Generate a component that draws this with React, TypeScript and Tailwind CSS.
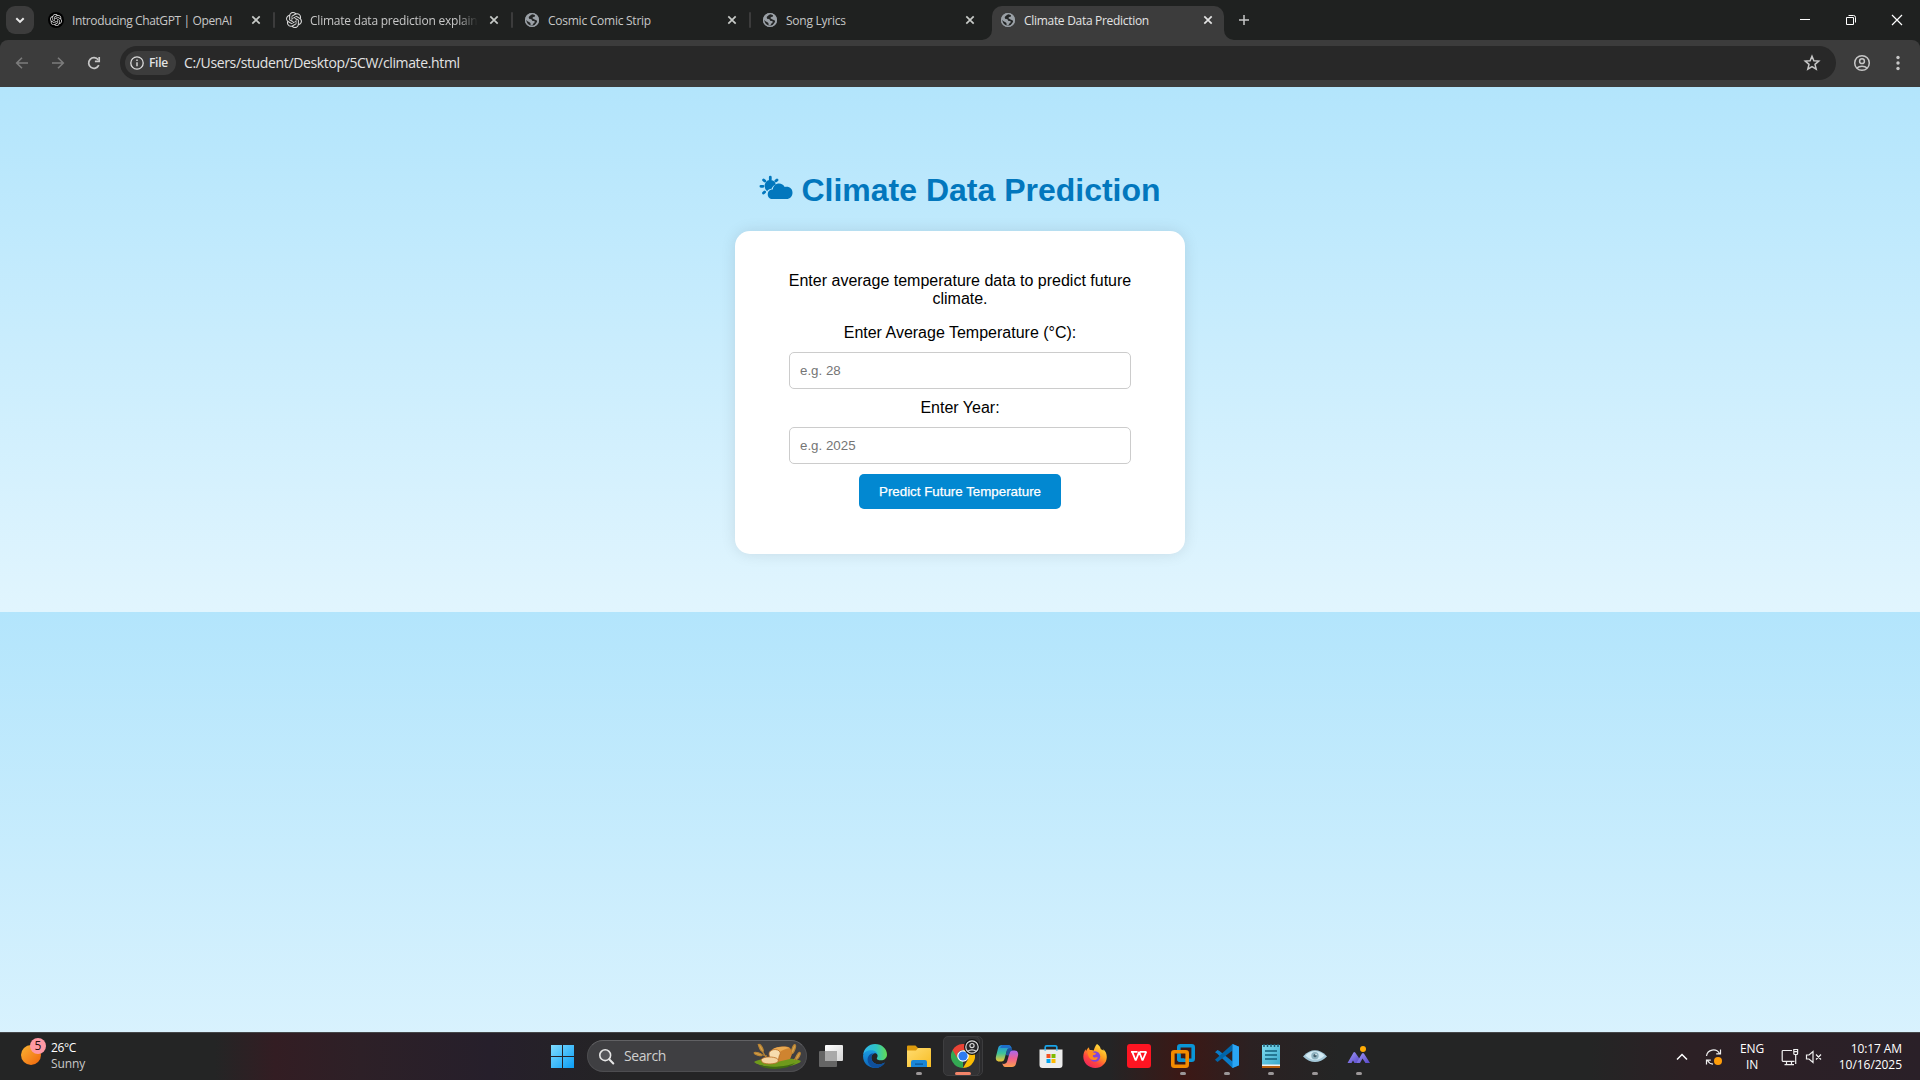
import React from "react";
import { SiOpenai } from "react-icons/si";

const UI = "font-['Open_Sans',sans-serif]";

/* ---------- browser icons ---------- */

function Globe() {
  return (
    <svg width="16" height="16" viewBox="0 0 16 16" className="shrink-0">
      <circle cx="8" cy="8" r="7" fill="#9aa0a6" />
      <path
        d="M8.600 1.800C6.600 2.600 6.900 3.600 5.800 4.100 4.700 4.600 4.500 5.600 5.100 6.400c.6.8 2 .3 2.600 1 .4.6.2 1.400 1.100 1.600.9.2 1.500-.100 1.900.6.300.7-.2 1.300-1 1.700-.8.400-.9 1.300-1.200 2.100-.8.300-1.500.2-2 0 .3-1.200.1-2.300-.7-2.900C4.900 9.900 3.200 9.600 1.900 7.800 2.100 10.900 3.600 13.500 7 14.300c2 .3 4-.8 4.600-2.300.3-.9 1.600-1.500 1.500-2.700-.1-1-1-1.500-2-1.600-.8-.1-1-.9-1.900-1-.8-.1-.9-.9-.3-1.400.7-.5 1.700-.3 2.100-1C11.300 3.100 10.300 1.900 8.600 1.800z"
        fill="#252727"
      />
      <circle cx="8" cy="8" r="6.400" fill="none" stroke="#9aa0a6" strokeWidth="1.300" />
    </svg>
  );
}

function OpenAiDark() {
  return (
    <span className="flex size-4 shrink-0 items-center justify-center rounded-full bg-black">
      <SiOpenai size={12} color="#d8d8d8" />
    </span>
  );
}

function CloseX({ color }: { color: string }) {
  return (
    <svg width="16" height="16" viewBox="0 0 16 16" className="shrink-0">
      <path d="M4.300 4.300 11.700 11.700M11.700 4.300 4.300 11.700" stroke={color} strokeWidth="1.700" />
    </svg>
  );
}

function Tab({ icon, title, sep, look = "" }: { icon: React.ReactNode; title: string; sep?: boolean; look?: string }) {
  return (
    <div className="flex h-7 w-[238px] items-center pl-[11px]">
      {icon}
      <span
        className={`mt-px ml-2 w-[168px] overflow-hidden whitespace-nowrap text-[12px] leading-5 text-[#c7c7c7] ${look || "tracking-[-0.25px]"}`}
      >
        {title}
      </span>
      <span className="ml-2">
        <CloseX color="#c7cac7" />
      </span>
      <span className={`ml-auto h-4 w-0.5 rounded ${sep ? "bg-[#3c3c3c]" : ""}`} />
    </div>
  );
}

function TabStrip() {
  return (
    <div className="flex h-10 items-start bg-[#1f2120] pl-1.5">
      <div className="mt-1.5 mr-[3px] flex size-7 items-center justify-center rounded-[9px] bg-[#3c3c3c]">
        <svg width="12" height="12" viewBox="0 0 12 12">
          <path d="M2.300 4.200 6 7.900 9.700 4.200" fill="none" stroke="#e8e8e8" strokeWidth="2" />
        </svg>
      </div>
      <div className="flex pt-1.5">
        <Tab icon={<OpenAiDark />} title="Introducing ChatGPT | OpenAI" sep look="tracking-[-0.38px]" />
        <Tab
          icon={<SiOpenai size={16} color="#d8d8d8" className="shrink-0" />}
          title="Climate data prediction explained"
          sep
          look="tracking-[-0.22px] [mask-image:linear-gradient(to_right,#000_148px,transparent_168px)]"
        />
        <Tab icon={<Globe />} title="Cosmic Comic Strip" sep />
        <Tab icon={<Globe />} title="Song Lyrics" />
      </div>
      <div className="relative mt-1.5 ml-[3px] flex h-[34px] w-[232px] items-start rounded-t-[10px] bg-[#3c3c3c] pl-2">
        <svg width="10" height="10" className="absolute bottom-0 -left-[10px]">
          <path d="M10 0V10H0A10 10 0 0 0 10 0z" fill="#3c3c3c" />
        </svg>
        <svg width="10" height="10" className="absolute -right-[10px] bottom-0">
          <path d="M0 0V10H10A10 10 0 0 1 0 0z" fill="#3c3c3c" />
        </svg>
        <div className="flex h-7 items-center">
          <Globe />
          <span className="mt-px ml-2 w-[168px] whitespace-nowrap text-[12px] leading-5 tracking-[-0.3px] text-[#e3e3e3]">
            Climate Data Prediction
          </span>
          <span className="ml-2">
            <CloseX color="#e3e3e3" />
          </span>
        </div>
      </div>
      <svg width="12" height="12" viewBox="0 0 12 12" className="mt-[14px] ml-[14px]">
        <path d="M6 1V11M1 6H11" stroke="#c7c7c7" strokeWidth="1.500" />
      </svg>
      <div className="ml-auto flex">
        {[
          <path key="m" d="M3 7.500H13" stroke="#fff" strokeWidth="1" />,
          <path key="r" d="M3.500 5.500h7v7h-7zM5.500 3.500h5a2 2 0 0 1 2 2v5" fill="none" stroke="#fff" strokeWidth="1" />,
          <path key="c" d="M3 3 13 13M13 3 3 13" stroke="#fff" strokeWidth="1.200" />,
        ].map((p, i) => (
          <span key={i} className="flex h-10 w-[46px] items-center justify-center">
            <svg width="16" height="16" viewBox="0 0 16 16">
              {p}
            </svg>
          </span>
        ))}
      </div>
    </div>
  );
}

function Toolbar() {
  return (
    <div className="h-[47px] bg-[#1f2120]">
      <div className="flex h-[46px] items-center rounded-t-[8px] bg-[#3c3c3c] pl-3.5 shadow-[0_1px_0_#3c3c3c]">
        <svg width="16" height="16" viewBox="0 0 16 16">
          <path d="M14 8H3M8 2.700 2.700 8 8 13.300" fill="none" stroke="#7c7c7c" strokeWidth="1.600" />
        </svg>
        <svg width="16" height="16" viewBox="0 0 16 16" className="ml-5">
          <path d="M2 8H13M8 2.700 13.300 8 8 13.300" fill="none" stroke="#7c7c7c" strokeWidth="1.600" />
        </svg>
        <svg width="16" height="16" viewBox="0 0 16 16" className="ml-5">
          <path d="M12.800 10.200A5.300 5.300 0 1 1 12.200 4.800" fill="none" stroke="#c7c7c7" strokeWidth="1.700" />
          <path d="M13.200 2V6.300H8.900" fill="none" stroke="#c7c7c7" strokeWidth="1.700" />
        </svg>
        <div className="ml-[18px] flex h-[34px] w-[1716px] items-center rounded-full bg-[#282828] pl-[5px]">
          <div className="flex h-6 w-[51px] items-center rounded-full bg-[#3c3c3c] pl-[5px]">
            <svg width="14" height="14" viewBox="0 0 14 14" className="shrink-0">
              <circle cx="7" cy="7" r="6.200" fill="none" stroke="#dcdcdc" strokeWidth="1.300" />
              <path d="M7 6.200V10.300M7 3.600V5" stroke="#dcdcdc" strokeWidth="1.400" />
            </svg>
            <span className="ml-[5px] text-[12px] leading-4 font-semibold tracking-[-0.3px] text-[#e3e3e3]">File</span>
          </div>
          <span className="ml-2 text-[14px] leading-5 tracking-[-0.36px] whitespace-nowrap text-[#e3e3e3]">
            C:/Users/student/Desktop/5CW/climate.html
          </span>
          <svg width="18" height="18" viewBox="0 0 24 24" className="mr-[15px] ml-auto">
            <path
              d="M12 2.900 14.500 9l6.500.500-5 4.300 1.600 6.500L12 16.800 6.400 20.300 8 13.800 3 9.500 9.500 9z"
              fill="none"
              stroke="#c7c7c7"
              strokeWidth="2"
            />
          </svg>
        </div>
        <svg width="18" height="18" viewBox="0 0 18 18" className="ml-[17px]" fill="none" stroke="#c7c7c7" strokeWidth="1.500">
          <circle cx="9" cy="9" r="7.300" />
          <circle cx="9" cy="7.200" r="2.400" />
          <path d="M3.800 14C6.500 11.600 11.500 11.600 14.200 14" />
        </svg>
        <svg width="6" height="18" viewBox="0 0 6 18" className="ml-6" fill="#c7c7c7">
          <circle cx="3" cy="3.500" r="1.700" />
          <circle cx="3" cy="9" r="1.700" />
          <circle cx="3" cy="14.500" r="1.700" />
        </svg>
      </div>
    </div>
  );
}

/* ---------- page ---------- */

function CloudSun() {
  return (
    <svg width="34" height="26" viewBox="0 0 34 26" className="mr-2 mb-1.5 shrink-0" fill="#0277bd">
      <g stroke="#0277bd" strokeWidth="2.800" strokeLinecap="round">
        <path d="M11.300 2.200V4.400M4.600 4.900 5.800 6.100M18 4.900 16.800 6.100M1.900 11.300H4M4.500 18 5.600 17" />
      </g>
      <path d="M5.800 11.700a5.600 5.600 0 0 1 11-2.300c-2.200.8-3.600 2.400-4.200 4.400-2.100.2-3.600 1.100-4.500 2.500a5.500 5.500 0 0 1-2.300-4.600z" />
      <path d="M12 24a5 5 0 0 1-.200-9.300c.600-.200 1.300-.200 2-.100C14.200 10.700 17 8.600 20 8.600c2.500 0 4.600 1.300 5.700 3.400C30.500 11 33.500 14 33.500 17.700 33.500 21.300 31 24 27.500 24z" />
    </svg>
  );
}

function Page() {
  return (
    <main className="flex h-[945px] flex-col items-center overflow-hidden bg-[linear-gradient(to_bottom,#b3e5fc,#e1f5fe)] bg-[length:100%_525px] bg-repeat-y font-['Liberation_Sans',Arial,sans-serif] text-black">
      <h1 className="mt-[85px] flex h-[37px] items-center text-[32px] leading-[37px] font-bold whitespace-nowrap text-[#0277bd]">
        <CloudSun />
        <span>Climate Data Prediction</span>
      </h1>
      <form
        onSubmit={(e) => e.preventDefault()}
        className="mt-[22px] flex h-[323px] w-[450px] flex-col items-center rounded-[15px] bg-white px-[54px] pt-[41px] shadow-[0_0_15px_rgba(0,0,0,0.1)]"
      >
        <p className="text-center text-[16px] leading-[18px] whitespace-nowrap">
          Enter average temperature data to predict future
          <br />
          climate.
        </p>
        <label className="mt-4 text-[16px] leading-[18px]">Enter Average Temperature (°C):</label>
        <input
          placeholder="e.g. 28"
          className="mt-2.5 h-[37px] w-full shrink-0 rounded-[5px] border border-[#ccc] px-2.5 text-[13.333px] placeholder:text-[#757575]"
        />
        <label className="mt-2.5 text-[16px] leading-[18px]">Enter Year:</label>
        <input
          placeholder="e.g. 2025"
          className="mt-2.5 h-[37px] w-full shrink-0 rounded-[5px] border border-[#ccc] px-2.5 text-[13.333px] placeholder:text-[#757575]"
        />
        <button className="mt-2.5 h-[35px] w-[202px] shrink-0 rounded-[5px] bg-[#0288d1] text-[13.333px] whitespace-nowrap text-white [-webkit-text-stroke:0.25px_white]">
          Predict Future Temperature
        </button>
      </form>
    </main>
  );
}

/* ---------- taskbar icons ---------- */

const S = { width: 24, height: 24, viewBox: "0 0 24 24" };

const WindowsIcon = () => (
  <svg {...S}>
    <defs>
      <linearGradient id="win" x1="0" y1="0" x2="1" y2="1" gradientUnits="objectBoundingBox">
        <stop offset="0" stopColor="#7fdcff" />
        <stop offset="1" stopColor="#0a9df5" />
      </linearGradient>
    </defs>
    <path d="M1 1h11v11H1zM13 1h11v11H13zM1 13h11v11H1zM13 13h11v11H13z" fill="url(#win)" />
  </svg>
);

const TaskView = () => (
  <svg {...S}>
    <defs>
      <linearGradient id="tv" x1="0" y1="0" x2="1" y2="1">
        <stop offset="0" stopColor="#fff" />
        <stop offset="1" stopColor="#d4d4d4" />
      </linearGradient>
    </defs>
    <rect x="6" y="1" width="18" height="16" rx="1" fill="url(#tv)" />
    <rect x="0" y="7" width="18" height="16" rx="1" fill="#6d6d6d" fillOpacity=".9" />
    <rect x="6" y="7" width="12" height="10" fill="#a9a9a9" />
  </svg>
);

const Edge = () => (
  <svg {...S}>
    <defs>
      <linearGradient id="eg" x1="0" y1=".3" x2="1" y2=".3">
        <stop offset="0" stopColor="#2fb4ee" />
        <stop offset=".55" stopColor="#2ec4c4" />
        <stop offset="1" stopColor="#63dc52" />
      </linearGradient>
      <linearGradient id="eb" x1="0" y1="0" x2="0" y2="1">
        <stop offset="0" stopColor="#1b9de2" />
        <stop offset="1" stopColor="#0c63b8" />
      </linearGradient>
    </defs>
    <path d="M.200 10.500C1 4.600 5.800 0 12 0c7 0 12 5 12 10.500 0 3.500-2.700 5.800-6 5.800-2.800 0-4.200-1-4.200-1.900 0-.600.800-1.100.800-2.600 0-2.300-2.400-4.400-5.600-4.400C4.700 7.400 1.800 8.300.200 10.500z" fill="url(#eg)" />
    <path d="M.1 11.200C1 8 4.200 6.200 8 6.200c3.500 0 6.300 2 6.500 4.600-.8-1.200-2.200-1.700-3.300-1.300C8.600 10.500 8 12.700 8.500 15c.8 4 4.800 5.800 8.500 5.300 2-.3 3.500-1.100 5-1.800-2 3.500-5.600 5.500-10 5.500C5 24-.5 18.500.1 11.200z" fill="url(#eb)" />
    <path d="M8.500 15c-.5-2.300.1-4.500 2.700-5.500-3.700-.7-6.600 2.100-6.600 6 0 4.200 3 7.800 7.400 8.500 4.400 0 8-2 10-5.500-1.500.7-3 1.500-5 1.800-3.700.5-7.700-1.300-8.500-5.300z" fill="#0f4f9c" />
  </svg>
);

const Explorer = () => (
  <svg {...S}>
    <defs>
      <linearGradient id="fx" x1="0" y1="0" x2="1" y2="1">
        <stop offset="0" stopColor="#ffdc70" />
        <stop offset="1" stopColor="#f8bd24" />
      </linearGradient>
    </defs>
    <path d="M0 2.500a1 1 0 0 1 1-1h7.500L11 4h12v4H0z" fill="#dd9a0c" />
    <path d="M0 6.500h9L11 4h12a1 1 0 0 1 1 1v18H0z" fill="url(#fx)" />
    <path d="M4 23v-5a2 2 0 0 1 2-2h12a2 2 0 0 1 2 2v5z" fill="#1a86d8" />
    <path d="M8 19.500h8v1.200H8z" fill="#0b5394" />
  </svg>
);

const ChromeIcon = () => (
  <svg {...S}>
    <path d="M12 12V24A12 12 0 0 1 1.600 6z" fill="#34a853" />
    <path d="M12 6H22.400A12 12 0 0 1 12 24L17.200 15z" fill="#fbbc04" />
    <path d="M1.600 6 6.800 15A6 6 0 0 1 12 6H22.400A12 12 0 0 0 1.600 6z" fill="#ea4335" />
    <circle cx="12" cy="12" r="5.800" fill="#fff" />
    <circle cx="12" cy="12" r="4.600" fill="#2f7cf0" />
  </svg>
);

const Copilot = () => (
  <svg {...S}>
    <defs>
      <linearGradient id="ca" x1="0" y1="0" x2="0" y2="1">
        <stop offset="0" stopColor="#1f8fe8" />
        <stop offset=".5" stopColor="#3cc29a" />
        <stop offset="1" stopColor="#f2c531" />
      </linearGradient>
      <linearGradient id="cb" x1="0" y1="0" x2="0" y2="1">
        <stop offset="0" stopColor="#a868f0" />
        <stop offset=".5" stopColor="#f0608f" />
        <stop offset="1" stopColor="#fba04c" />
      </linearGradient>
    </defs>
    <path d="M16.800 4.500 15.900 2.500A2.600 2.600 0 0 0 13.500 1H7a4 4 0 0 0-3.800 2.800L1.100 12C.200 15.400 1.500 17.500 4.300 17.500h2.200a3 3 0 0 0 2.900-2.200L11.700 7a3.500 3.500 0 0 1 5.100-2.500z" fill="url(#ca)" />
    <path d="M7.200 19.500l.9 2A2.600 2.600 0 0 0 10.500 23H17a4 4 0 0 0 3.800-2.800L22.900 12c.900-3.400-.400-5.500-3.200-5.500h-2.200a3 3 0 0 0-2.900 2.200L12.300 17a3.500 3.500 0 0 1-5.100 2.500z" fill="url(#cb)" />
    <path d="M7 1h6.500a2.600 2.600 0 0 1 2.400 1.500l1.600 4a3 3 0 0 0-2.900 2.200l-.9 3-2.900-.7L11.700 7c.4-1.700.9-2.400 1.500-3H5z" fill="#1c62c4" fillOpacity=".75" />
  </svg>
);

const Store = () => (
  <svg {...S}>
    <path d="M6.200 7V3.200A1.400 1.400 0 0 1 7.600 1.800h8.800a1.400 1.400 0 0 1 1.400 1.400V7" fill="none" stroke="#19a4e8" strokeWidth="1.700" />
    <path d="M.5 5.500h23V21a3 3 0 0 1-3 3h-17a3 3 0 0 1-3-3z" fill="#ececec" />
    <path d="M6.200 5.500v1M17.800 5.500v1" stroke="#19a4e8" strokeWidth="1.700" />
    <path d="M7.500 10h4v4h-4z" fill="#f25022" />
    <path d="M12.500 10h4v4h-4z" fill="#7fba00" />
    <path d="M7.500 15h4v4h-4z" fill="#00a4ef" />
    <path d="M12.500 15h4v4h-4z" fill="#ffb900" />
  </svg>
);

const Firefox = () => (
  <svg {...S}>
    <defs>
      <linearGradient id="ff" x1=".85" y1="0" x2=".2" y2="1">
        <stop offset="0" stopColor="#fff04a" />
        <stop offset=".4" stopColor="#ffa01f" />
        <stop offset=".7" stopColor="#ff4540" />
        <stop offset="1" stopColor="#ec2060" />
      </linearGradient>
    </defs>
    <path d="M14 0c2.500 1.500 3.600 3.500 3.800 5.200.8.200 2 .8 2.700 1.500 0-.7-.2-1.200-.4-1.600 2.500 2 3.700 4.900 3.700 7.900C23.800 19.300 18.500 24 12.300 24 5.500 24 .3 19 .3 12.800c0-3.200 1-5.800 2.400-7.500L3 7.200C3.700 5.500 5 4 6 3.300c0 1 .3 2 .8 2.700 1.500-.3 2.900 0 4 .5C11.300 4 12.500 1.500 14 0z" fill="url(#ff)" />
    <circle cx="12" cy="12.500" r="5.200" fill="#8244dc" />
    <path d="M4.500 8.200c1.900-1.300 4.500-1 6 .3 1.200.3 2.400.5 2.700 1.200-.5 1-2 1.100-2.900 1.300-.8.500-.6 1.700.3 2.200 1.700.8 2.500-.2 4.200.2-.6 2-2.300 3-4.500 2.600C6.500 15.500 5 12 4.500 8.200z" fill="#ff8a1f" />
  </svg>
);

const Wps = () => (
  <svg {...S}>
    <rect width="24" height="24" rx="3" fill="#fe1522" />
    <path d="M4 7.800h6.500M5.200 7.800 8.700 16.500l3.500-8.700L15.500 16.500 19.200 7.800H13" fill="none" stroke="#fff" strokeWidth="1.800" strokeLinejoin="bevel" />
  </svg>
);

const VMware = () => (
  <svg {...S} fill="none" strokeWidth="3.600">
    <rect x="7.800" y="1.800" width="14.400" height="14.400" rx="1.500" stroke="#0a95d6" />
    <rect x="1.800" y="7.800" width="14.400" height="14.400" rx="1.500" stroke="#f38b00" />
    <path d="M7.800 10V14.700A1.500 1.500 0 0 0 9.300 16.200H13" stroke="#0a95d6" />
  </svg>
);

const VsCode = () => (
  <svg {...S}>
    <path d="M17.500 0 24 2.800V21.200L17.500 24 2 9.500 0 8.200 2.500 6 4.500 7 17.500 17.500V6.500z" fill="#0a7cc9" />
    <path d="M0 15.800 17.500 0V6.500L2.500 18z" fill="#0065a9" />
    <path d="M17.500 0 24 2.800V21.200L17.500 24z" fill="#2aa5f5" />
  </svg>
);

const Notepad = () => (
  <svg {...S}>
    <defs>
      <linearGradient id="np" x1="0" y1="0" x2="1" y2="1">
        <stop offset="0" stopColor="#7fdcf0" />
        <stop offset="1" stopColor="#3ba9cc" />
      </linearGradient>
    </defs>
    <path d="M3 20h18v4H3z" fill="#b8600f" />
    <path d="M3 20h18v2H3z" fill="#f2f2f2" />
    <path d="M3 1h18v19.500H3z" fill="url(#np)" />
    <path d="M5 0v3M8.500 0v3M12 0v3M15.500 0v3M19 0v3" stroke="#1f5d75" strokeWidth="1.500" />
    <path d="M6 7h12M6 11h12M6 15h12" stroke="#14607c" strokeWidth="1.500" />
  </svg>
);

const Eye = () => (
  <svg {...S}>
    <path d="M0 12.500C4 8 8 6.300 12 6.300s8 1.700 12 6.200c-4 4-8 5.500-12 5.500S4 16.500 0 12.500z" fill="#a4c8d8" />
    <path d="M2.500 11.500c3-3 6.500-4.300 9.500-4.300s6.500 1.300 9.500 4.300c-3.500 3.500-6.500 4.500-9.500 4.500s-6-1-9.500-4.500z" fill="#d3ebf4" />
    <circle cx="12" cy="11.700" r="3.700" fill="#8fb3c1" />
    <circle cx="12" cy="11.700" r="1.600" fill="#45616e" />
    <circle cx="13" cy="10.600" r=".8" fill="#e8f4f8" />
  </svg>
);

const Peaks = () => (
  <svg {...S}>
    <defs>
      <linearGradient id="pk" x1="0" y1="0" x2="1" y2="1">
        <stop offset="0" stopColor="#a29bf8" />
        <stop offset="1" stopColor="#5646c8" />
      </linearGradient>
    </defs>
    <path d="M.5 19 6.500 8.500Q7.300 7.500 8.200 8.500L13 15.500 10.500 19H7.500L6 16.500 4.500 19z" fill="url(#pk)" />
    <path d="M9.500 19 15 9.500Q16 8.300 17 9.500L23 19H18.500L15.500 14.500 13 19z" fill="url(#pk)" />
    <circle cx="16" cy="5" r="3" fill="#ffac05" />
  </svg>
);

const Bread = () => (
  <svg width="49" height="26" viewBox="0 0 49 26">
    <path d="M1 19C8 14 40 14 48 18 43 25.500 9 26 1 19z" fill="#6f9a1c" />
    <path d="M6 22c10 3 27 2 36-2-7 7-29 8-36 2z" fill="#3f6b12" />
    <g stroke="#b98434" strokeWidth="1.200" fill="#d6a24c">
      <path d="M14 16 5 1M14 13 2 10" fill="none" />
      <ellipse cx="8" cy="5" rx="1.300" ry="4" transform="rotate(-28 8 5)" />
      <ellipse cx="5" cy="11" rx="1.200" ry="4" transform="rotate(-72 5 11)" />
      <path d="M37 14 42 3M41 17 47 9" fill="none" />
      <ellipse cx="40.500" cy="6" rx="1.400" ry="4.500" transform="rotate(20 40.500 6)" />
      <ellipse cx="45" cy="13" rx="1.300" ry="4" transform="rotate(28 45 13)" />
    </g>
    <path d="M18 8C20 4 33 2 37 5c2 2 2 8 0 11L24 19z" fill="#cf8430" />
    <path d="M20 6C24 3.500 33 3 36.500 5 32 6 29 7 27 9z" fill="#e9a851" />
    <path d="M16 11c0-5 9-6 11-2 1 2-1 3-1 5l-1 5-8-2z" fill="#f6dcae" stroke="#b76d25" strokeWidth=".8" />
    <path d="M8 17c1-3 9-4 15-2 3 1 3 4 0 5-5 1.500-11 1-13.500-.500z" fill="#f3d3a0" stroke="#b76d25" strokeWidth=".8" />
  </svg>
);

function Slot({ children, running }: { children: React.ReactNode; running?: boolean }) {
  return (
    <div className="flex h-[47px] w-11 flex-col items-center pt-[11px]">
      {children}
      <span className={`mt-1 h-[3px] w-1.5 rounded-full ${running ? "bg-[#9b9798]" : ""}`} />
    </div>
  );
}

function Taskbar() {
  return (
    <footer className="grid h-12 grid-cols-[540px_1fr_540px] border-t border-[#454648] bg-[linear-gradient(to_right,#242525_0px,#242525_215px,#331d23_275px,#2d2027_360px,#261f2b_490px,#242425_620px,#242425_1110px,#3c1815_1185px,#2b2122_1250px,#242525_1340px,#242525_1590px,#2c2025_1690px,#2a2028_1920px)]">
      <div className="flex pl-5">
        <div className="relative mt-1.5 h-[34px] w-[30px]">
          <div className="absolute top-1.5 left-[1px] size-5 rounded-full bg-linear-to-br from-[#f8b432] to-[#ef6208]" />
          <div className="absolute -top-[1px] left-2.5 flex size-4 items-center justify-center rounded-full bg-[#ff99a4] text-[12px] leading-none text-[#2a1012]">
            5
          </div>
        </div>
        <div className="mt-[7px] ml-px flex flex-col text-[12px] leading-4 tracking-[-0.1px] whitespace-nowrap">
          <span className="tracking-[-0.4px] text-white">26°C</span>
          <span className="text-[#c9c9c9]">Sunny</span>
        </div>
      </div>

      <div className="flex">
        <Slot>
          <WindowsIcon />
        </Slot>
        <div className="mt-[7px] mr-[2px] ml-[3px] flex h-8 w-[220px] items-center rounded-full border border-[#4d4d50] border-t-[#616164] bg-[#3f3f42] pl-2.5">
          <svg width="17" height="17" viewBox="0 0 17 17" fill="none" stroke="#e6e6e6">
            <circle cx="7.200" cy="7.200" r="5.400" strokeWidth="1.600" fill="#55565a" />
            <path d="M11.200 11.200 15.300 15.500" strokeWidth="2" strokeLinecap="round" />
          </svg>
          <span className="mb-px ml-[9px] text-[14px] tracking-[-0.4px] text-[#cfcfcf]">Search</span>
          <span className="mr-1 ml-auto">
            <Bread />
          </span>
        </div>
        <Slot>
          <TaskView />
        </Slot>
        <Slot>
          <Edge />
        </Slot>
        <Slot running>
          <Explorer />
        </Slot>
        <div className="relative flex w-11 flex-col items-center">
          <div className="absolute top-[3px] left-[5px] h-10 w-[37px] rounded-[5px] border border-[#3c3c3e] bg-[#2b2b2d]" />
          <div className="absolute top-[3px] left-[2px] flex h-10 w-[37px] flex-col items-center rounded-[5px] border border-[#3e3e40] bg-[#323234] pt-[7px]">
            <span className="ml-[3px]">
              <ChromeIcon />
            </span>
            <span className="mt-1 ml-[3px] h-[3px] w-4 shrink-0 rounded-full bg-[#f28469]" />
          </div>
          <svg width="16" height="16" viewBox="0 0 16 16" className="absolute top-1.5 left-[23px]" fill="none" stroke="#d8d8d8" strokeWidth="1.200">
            <circle cx="8" cy="8" r="7.200" fill="#252527" strokeWidth="1.600" stroke="#141415" />
            <circle cx="8" cy="8" r="6.200" />
            <circle cx="8" cy="6.600" r="2.100" />
            <path d="M3.900 12.300C6 10.400 10 10.400 12.100 12.300" />
          </svg>
        </div>
        <Slot>
          <Copilot />
        </Slot>
        <Slot>
          <Store />
        </Slot>
        <Slot>
          <Firefox />
        </Slot>
        <Slot>
          <Wps />
        </Slot>
        <Slot running>
          <VMware />
        </Slot>
        <Slot running>
          <VsCode />
        </Slot>
        <Slot running>
          <Notepad />
        </Slot>
        <Slot running>
          <Eye />
        </Slot>
        <Slot running>
          <Peaks />
        </Slot>
      </div>

      <div className="flex items-center justify-end pr-[19px] text-[12px] leading-4 whitespace-nowrap text-white">
        <svg width="12" height="12" viewBox="0 0 12 12" className="mr-[17px]">
          <path d="M1 8.500 6 3.500 11 8.500" fill="none" stroke="#fff" strokeWidth="1.500" />
        </svg>
        <svg width="18" height="18" viewBox="0 0 18 18" className="mr-[16px]" fill="none" stroke="#f0f0f0" strokeWidth="1.200">
          <path d="M1.500 8A7 7 0 0 1 14.500 5.500M15.500 1.500V5.800H11.200M8 16.200A7 7 0 0 1 2.500 12.500M1.500 16.500V12.200H5.800" />
          <circle cx="13" cy="13" r="4" fill="#ff9d0a" stroke="none" />
        </svg>
        <div className="flex w-[26px] flex-col items-center tracking-[-0.2px]">
          <span>ENG</span>
          <span>IN</span>
        </div>
        <svg width="18" height="18" viewBox="0 0 18 18" className="ml-[16px]" fill="none" stroke="#f0f0f0" strokeWidth="1.200">
          <path d="M11 2.500H2a.8.800 0 0 0-.8.800V12.500a.8.800 0 0 0 .8.800H13.500M5.500 13.500V16.500M10.500 13.500V16.500M3.500 16.600H13" />
          <path d="M12.800 1.500h3.800V5.500a1 1 0 0 1-1 1h-1.800a1 1 0 0 1-1-1zM14.700 6.500V16M12.800 3.700h3.800" />
        </svg>
        <svg width="18" height="18" viewBox="0 0 18 18" className="mr-[17px] ml-[6px]" fill="none" stroke="#f0f0f0" strokeWidth="1.200">
          <path d="M1.500 7v4H4l4 3.500V3.500L4 7zM11 6.500 16 11.500M16 6.500 11 11.500" />
        </svg>
        <div className="flex w-[62px] flex-col items-end">
          <span className="tracking-[-0.1px]">10:17 AM</span>
          <span className="tracking-[-0.05px]">10/16/2025</span>
        </div>
      </div>
    </footer>
  );
}

export default function App() {
  return (
    <div className={`flex h-[1080px] w-[1920px] flex-col overflow-hidden ${UI}`}>
      <TabStrip />
      <Toolbar />
      <Page />
      <Taskbar />
    </div>
  );
}
